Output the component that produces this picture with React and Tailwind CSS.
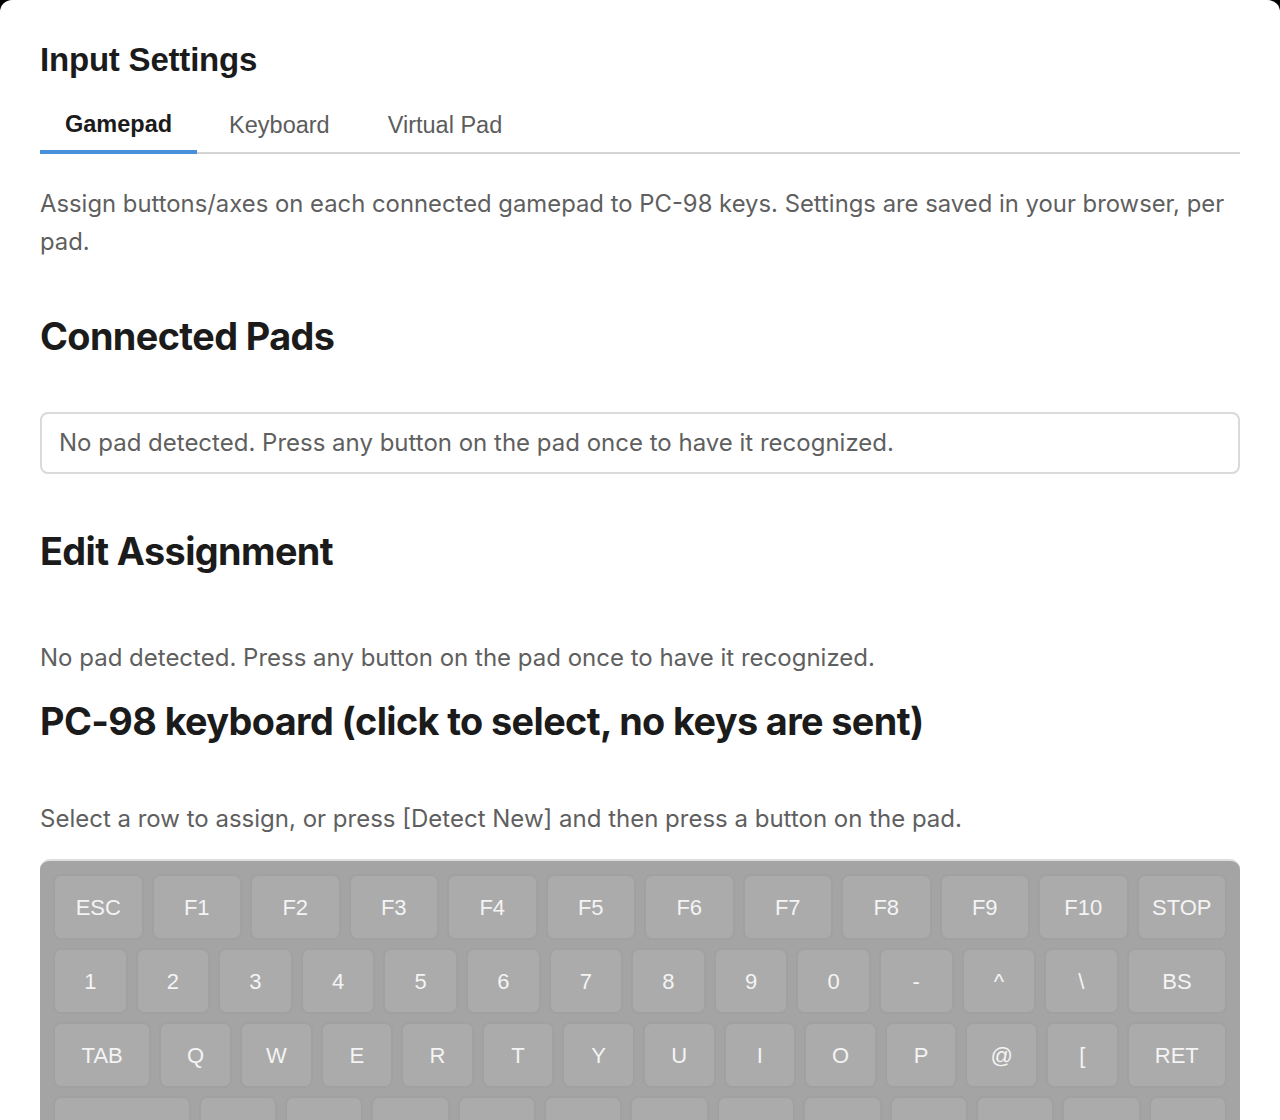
const rows = [
  [
    ["ESC", 1], ["F1", 1], ["F2", 1], ["F3", 1], ["F4", 1], ["F5", 1],
    ["F6", 1], ["F7", 1], ["F8", 1], ["F9", 1], ["F10", 1], ["STOP", 1],
  ],
  [
    ["1", 74], ["2", 74], ["3", 74], ["4", 74], ["5", 74], ["6", 74], ["7", 74],
    ["8", 74], ["9", 74], ["0", 74], ["-", 74], ["^", 74], ["\\", 74], ["BS", 101],
  ],
  [
    ["TAB", 99], ["Q", 72], ["W", 72], ["E", 72], ["R", 72], ["T", 72], ["Y", 72],
    ["U", 72], ["I", 72], ["O", 72], ["P", 72], ["@", 72], ["[", 72], ["RET", 101],
  ],
  [
    ["CTRL", 140], ["A", 78], ["S", 78], ["D", 78], ["F", 78], ["G", 78], ["H", 78],
    ["J", 78], ["K", 78], ["L", 78], [";", 78], [":", 78], ["]", 78],
  ],
];

function Key({ label, grow }) {
  return (
    <button
      type="button"
      style={{ flexGrow: grow, flexBasis: 0 }}
      className="h-[66px] min-w-0 rounded-lg border-2 border-[#a1a1a1] bg-[#ababab] text-[22px] text-[#f4f4f4] font-['Liberation_Sans',Arial,sans-serif]"
    >
      {label}
    </button>
  );
}

export default function App() {
  return (
    <div className="min-h-[1120px] bg-black">
      <div className="min-h-[1120px] rounded-xl bg-white px-10 pt-[38px] pb-10 font-['Inter',sans-serif] text-[#1b1b1b]">
        <h1 className="text-[33px] font-bold leading-[44px] tracking-[-0.2px] font-['Liberation_Sans',Arial,sans-serif]">
          Input Settings
        </h1>

        {/* tabs */}
        <div className="mt-[26px] flex border-b-2 border-[#d4d4d4] font-['Liberation_Sans',Arial,sans-serif] text-[23.5px] leading-[32px]">
          <button className="-mb-[2px] border-b-4 border-[#4a8fdb] px-[25px] pb-[10px] font-bold text-[#1b1b1b]">
            Gamepad
          </button>
          <button className="pl-[32px] pr-[29px] pb-[10px] text-[#5c5c5c]">Keyboard</button>
          <button className="pl-[29px] pr-[29px] pb-[10px] text-[#5c5c5c]">Virtual Pad</button>
        </div>

        <p className="mt-[31px] text-[23.85px] leading-[38px] text-[#5f5f5f]">
          Assign buttons/axes on each connected gamepad to PC-98 keys. Settings are saved in your browser, per pad.
        </p>

        <h2 className="mt-[53px] text-[37.8px] font-bold leading-[44px] tracking-[-0.6px]">Connected Pads</h2>

        <div className="mt-[54px] rounded-lg border-2 border-[#dadada] px-[17px] py-[15px] text-[24px] leading-[28px] text-[#5f5f5f]">
          No pad detected. Press any button on the pad once to have it recognized.
        </div>

        <h2 className="mt-[55px] text-[37.8px] font-bold leading-[44px] tracking-[-0.6px]">Edit Assignment</h2>

        <p className="mt-[69px] text-[24px] leading-[32px] text-[#5f5f5f]">
          No pad detected. Press any button on the pad once to have it recognized.
        </p>

        <h2 className="mt-[25px] text-[37.8px] font-bold leading-[44px] tracking-[-0.6px]">
          PC-98 keyboard (click to select, no keys are sent)
        </h2>

        <p className="mt-[60px] text-[24px] leading-[32px] text-[#5f5f5f]">
          Select a row to assign, or press [Detect New] and then press a button on the pad.
        </p>

        {/* keyboard */}
        <div className="mt-[24px] flex flex-col gap-2 rounded-[10px] border-t-2 border-[#dedede] bg-[#a4a4a4] px-[13px] pt-[13px] pb-4">
          {rows.map((row, i) => (
            <div key={i} className="flex gap-2">
              {row.map(([label, grow]) => (
                <Key key={label} label={label} grow={grow} />
              ))}
            </div>
          ))}
        </div>
      </div>
    </div>
  );
}
